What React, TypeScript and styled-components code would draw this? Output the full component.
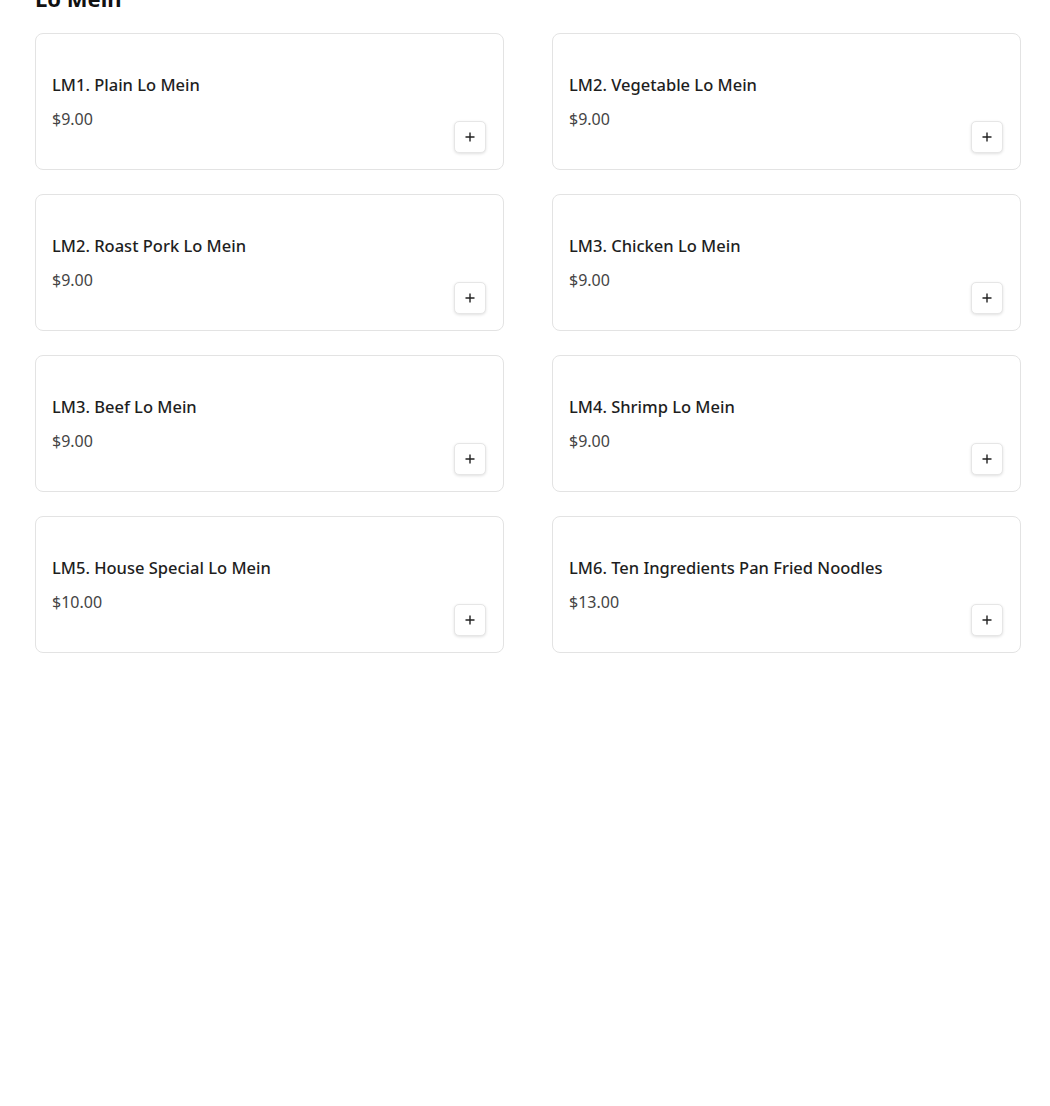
import React from 'react'
import styled, { createGlobalStyle } from 'styled-components'

const GlobalStyle = createGlobalStyle`
  body {
    margin: 0;
    background: #fff;
    font-family: 'Noto Sans', 'DejaVu Sans', sans-serif;
    color: #1a1a1a;
  }
`

const Section = styled.section`
  padding: 0 29px 0 35px;
`

const Heading = styled.h2`
  margin: -18px 0 19px;
  font-size: 22px;
  line-height: 32px;
  font-weight: 700;
  color: #111;
`

const Grid = styled.div`
  display: grid;
  grid-template-columns: 469px 469px;
  column-gap: 48px;
  row-gap: 24px;
`

const Card = styled.div`
  box-sizing: border-box;
  height: 137px;
  border: 1px solid #e3e3e3;
  border-radius: 8px;
  padding: 16px;
  display: flex;
  justify-content: space-between;
  align-items: flex-end;
`

const Info = styled.div`
  align-self: flex-start;
  padding-top: 23px;
  display: flex;
  flex-direction: column;
  gap: 10px;
`

const Title = styled.div`
  font-size: 16.5px;
  line-height: 24px;
  font-weight: 500;
  color: #1e1e1e;
`

const Price = styled.div`
  font-size: 16px;
  line-height: 24px;
  color: #444;
`

const AddButton = styled.button`
  width: 32px;
  height: 32px;
  margin-right: 1px;
  padding: 0;
  border: 1px solid #e6e6e6;
  border-radius: 5px;
  background: #fff;
  box-shadow: 0 1px 3px rgba(0, 0, 0, 0.12);
  display: flex;
  align-items: center;
  justify-content: center;
  cursor: pointer;
`

const items = [
  { name: 'LM1. Plain Lo Mein', price: '$9.00' },
  { name: 'LM2. Vegetable Lo Mein', price: '$9.00' },
  { name: 'LM2. Roast Pork Lo Mein', price: '$9.00' },
  { name: 'LM3. Chicken Lo Mein', price: '$9.00' },
  { name: 'LM3. Beef Lo Mein', price: '$9.00' },
  { name: 'LM4. Shrimp Lo Mein', price: '$9.00' },
  { name: 'LM5. House Special Lo Mein', price: '$10.00' },
  { name: 'LM6. Ten Ingredients Pan Fried Noodles', price: '$13.00' },
]

function PlusIcon() {
  return (
    <svg width="10" height="10" viewBox="0 0 10 10">
      <path d="M5 0.5v9M0.5 5h9" stroke="#222" strokeWidth="1.4" />
    </svg>
  )
}

export default function App() {
  return (
    <>
      <GlobalStyle />
      <Section>
        <Heading>Lo Mein</Heading>
        <Grid>
          {items.map((item, i) => (
            <Card key={i}>
              <Info>
                <Title>{item.name}</Title>
                <Price>{item.price}</Price>
              </Info>
              <AddButton aria-label="Add">
                <PlusIcon />
              </AddButton>
            </Card>
          ))}
        </Grid>
      </Section>
    </>
  )
}
